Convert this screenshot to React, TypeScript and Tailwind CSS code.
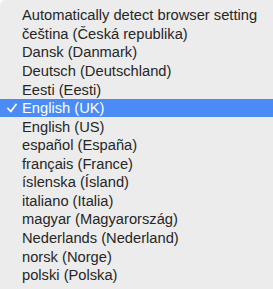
const languages = [
  "Automatically detect browser setting",
  "čeština (Česká republika)",
  "Dansk (Danmark)",
  "Deutsch (Deutschland)",
  "Eesti (Eesti)",
  "English (UK)",
  "English (US)",
  "español (España)",
  "français (France)",
  "íslenska (Ísland)",
  "italiano (Italia)",
  "magyar (Magyarország)",
  "Nederlands (Nederland)",
  "norsk (Norge)",
  "polski (Polska)",
]

export default function App() {
  const selected = "English (UK)"
  return (
    <div className="w-[273px] h-[289px] overflow-hidden bg-[#ececec] rounded-tl-[5px] pt-[6px] font-['Liberation_Sans',Arial,sans-serif] text-[14.7px] text-[#262626]">
      {languages.map((lang) => {
        const active = lang === selected
        return (
          <div
            key={lang}
            className={
              active
                ? "flex items-center h-[18.57px] bg-[#4a8bf5] text-white"
                : "flex items-center h-[18.57px]"
            }
          >
            <span className="w-[22px] flex justify-center pl-[2px]">
              {active && (
                <svg width="10" height="10" viewBox="0 0 10 10" fill="none">
                  <path d="M1 5.5 L3.8 8.5 L9 1.5" stroke="white" strokeWidth="1.8" strokeLinecap="round" strokeLinejoin="round" />
                </svg>
              )}
            </span>
            <span className="whitespace-nowrap">{lang}</span>
          </div>
        )
      })}
    </div>
  )
}
